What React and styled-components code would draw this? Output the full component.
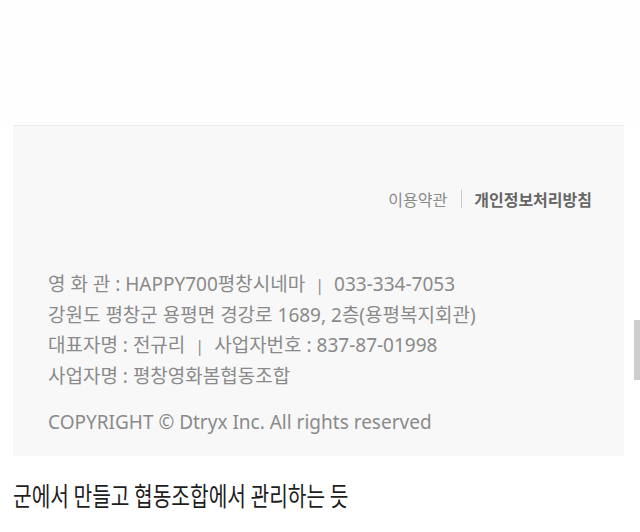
import styled, { createGlobalStyle } from "styled-components";

const GlobalStyle = createGlobalStyle`
  html, body {
    margin: 0;
    padding: 0;
    background: #ffffff;
  }
  body {
    font-family: "Noto Sans", "Noto Sans CJK KR", sans-serif;
    width: 640px;
    height: 532px;
    overflow: hidden;
  }
`;

const Page = styled.div`
  position: relative;
  width: 640px;
  height: 532px;
  display: flex;
  flex-direction: column;
`;

const TopBlank = styled.div`
  height: 125px;
  background: #fefefe;
`;

const Footer = styled.footer`
  margin: 0 16px 0 13px;
  height: 331px;
  box-sizing: border-box;
  background: #f8f8f8;
  border-top: 1px solid #ececec;
  display: flex;
  flex-direction: column;
  padding: 61px 32px 0 35px;
`;

const Links = styled.nav`
  display: flex;
  justify-content: flex-end;
  align-items: center;
  font-family: "Noto Sans CJK KR", sans-serif;
  font-size: 16px;
  line-height: 24px;
`;

const LinkItem = styled.span`
  color: ${(p) => (p.$strong ? "#666" : "#8a8a8a")};
  font-weight: ${(p) => (p.$strong ? 700 : 400)};
`;

const Divider = styled.span`
  width: 1px;
  height: 18px;
  background: #c8c8c8;
  margin: 0 12px 0 14px;
`;

const Info = styled.div`
  margin-top: 58px;
  display: flex;
  flex-direction: column;
  color: #8a8a8a;
  font-size: 19px;
  line-height: 30px;
  font-family: "Noto Sans", "Noto Sans CJK KR", sans-serif;
`;

const Line = styled.div`
  white-space: nowrap;
`;

const Sep = styled.span`
  margin: 0 10px;
  font-size: 16px;
`;

const Copyright = styled.div`
  margin-top: 16px;
  color: #8a8a8a;
  font-size: 19px;
  line-height: 30px;
  font-family: "Noto Sans", sans-serif;
`;

const Comment = styled.p`
  margin: 22px 0 0 13px;
  font-family: "Noto Sans CJK KR", sans-serif;
  font-size: 26px;
  line-height: 34px;
  color: #1e1e1e;
  white-space: nowrap;
  transform: scaleX(0.78);
  transform-origin: left center;
`;

const Scrollbar = styled.div`
  position: absolute;
  right: 0;
  top: 320px;
  width: 6px;
  height: 60px;
  background: #cdcdcd;
`;

export default function App() {
  return (
    <>
      <GlobalStyle />
      <Page>
        <TopBlank />
        <Footer>
          <Links>
            <LinkItem>이용약관</LinkItem>
            <Divider />
            <LinkItem $strong>개인정보처리방침</LinkItem>
          </Links>
          <Info>
            <Line>
              영 화 관 : HAPPY700평창시네마<Sep>|</Sep>033-334-7053
            </Line>
            <Line>강원도 평창군 용평면 경강로 1689, 2층(용평복지회관)</Line>
            <Line>
              대표자명 : 전규리<Sep>|</Sep>사업자번호 : 837-87-01998
            </Line>
            <Line>사업자명 : 평창영화봄협동조합</Line>
          </Info>
          <Copyright>COPYRIGHT © Dtryx Inc. All rights reserved</Copyright>
        </Footer>
        <Comment>군에서 만들고 협동조합에서 관리하는 듯</Comment>
        <Scrollbar />
      </Page>
    </>
  );
}
